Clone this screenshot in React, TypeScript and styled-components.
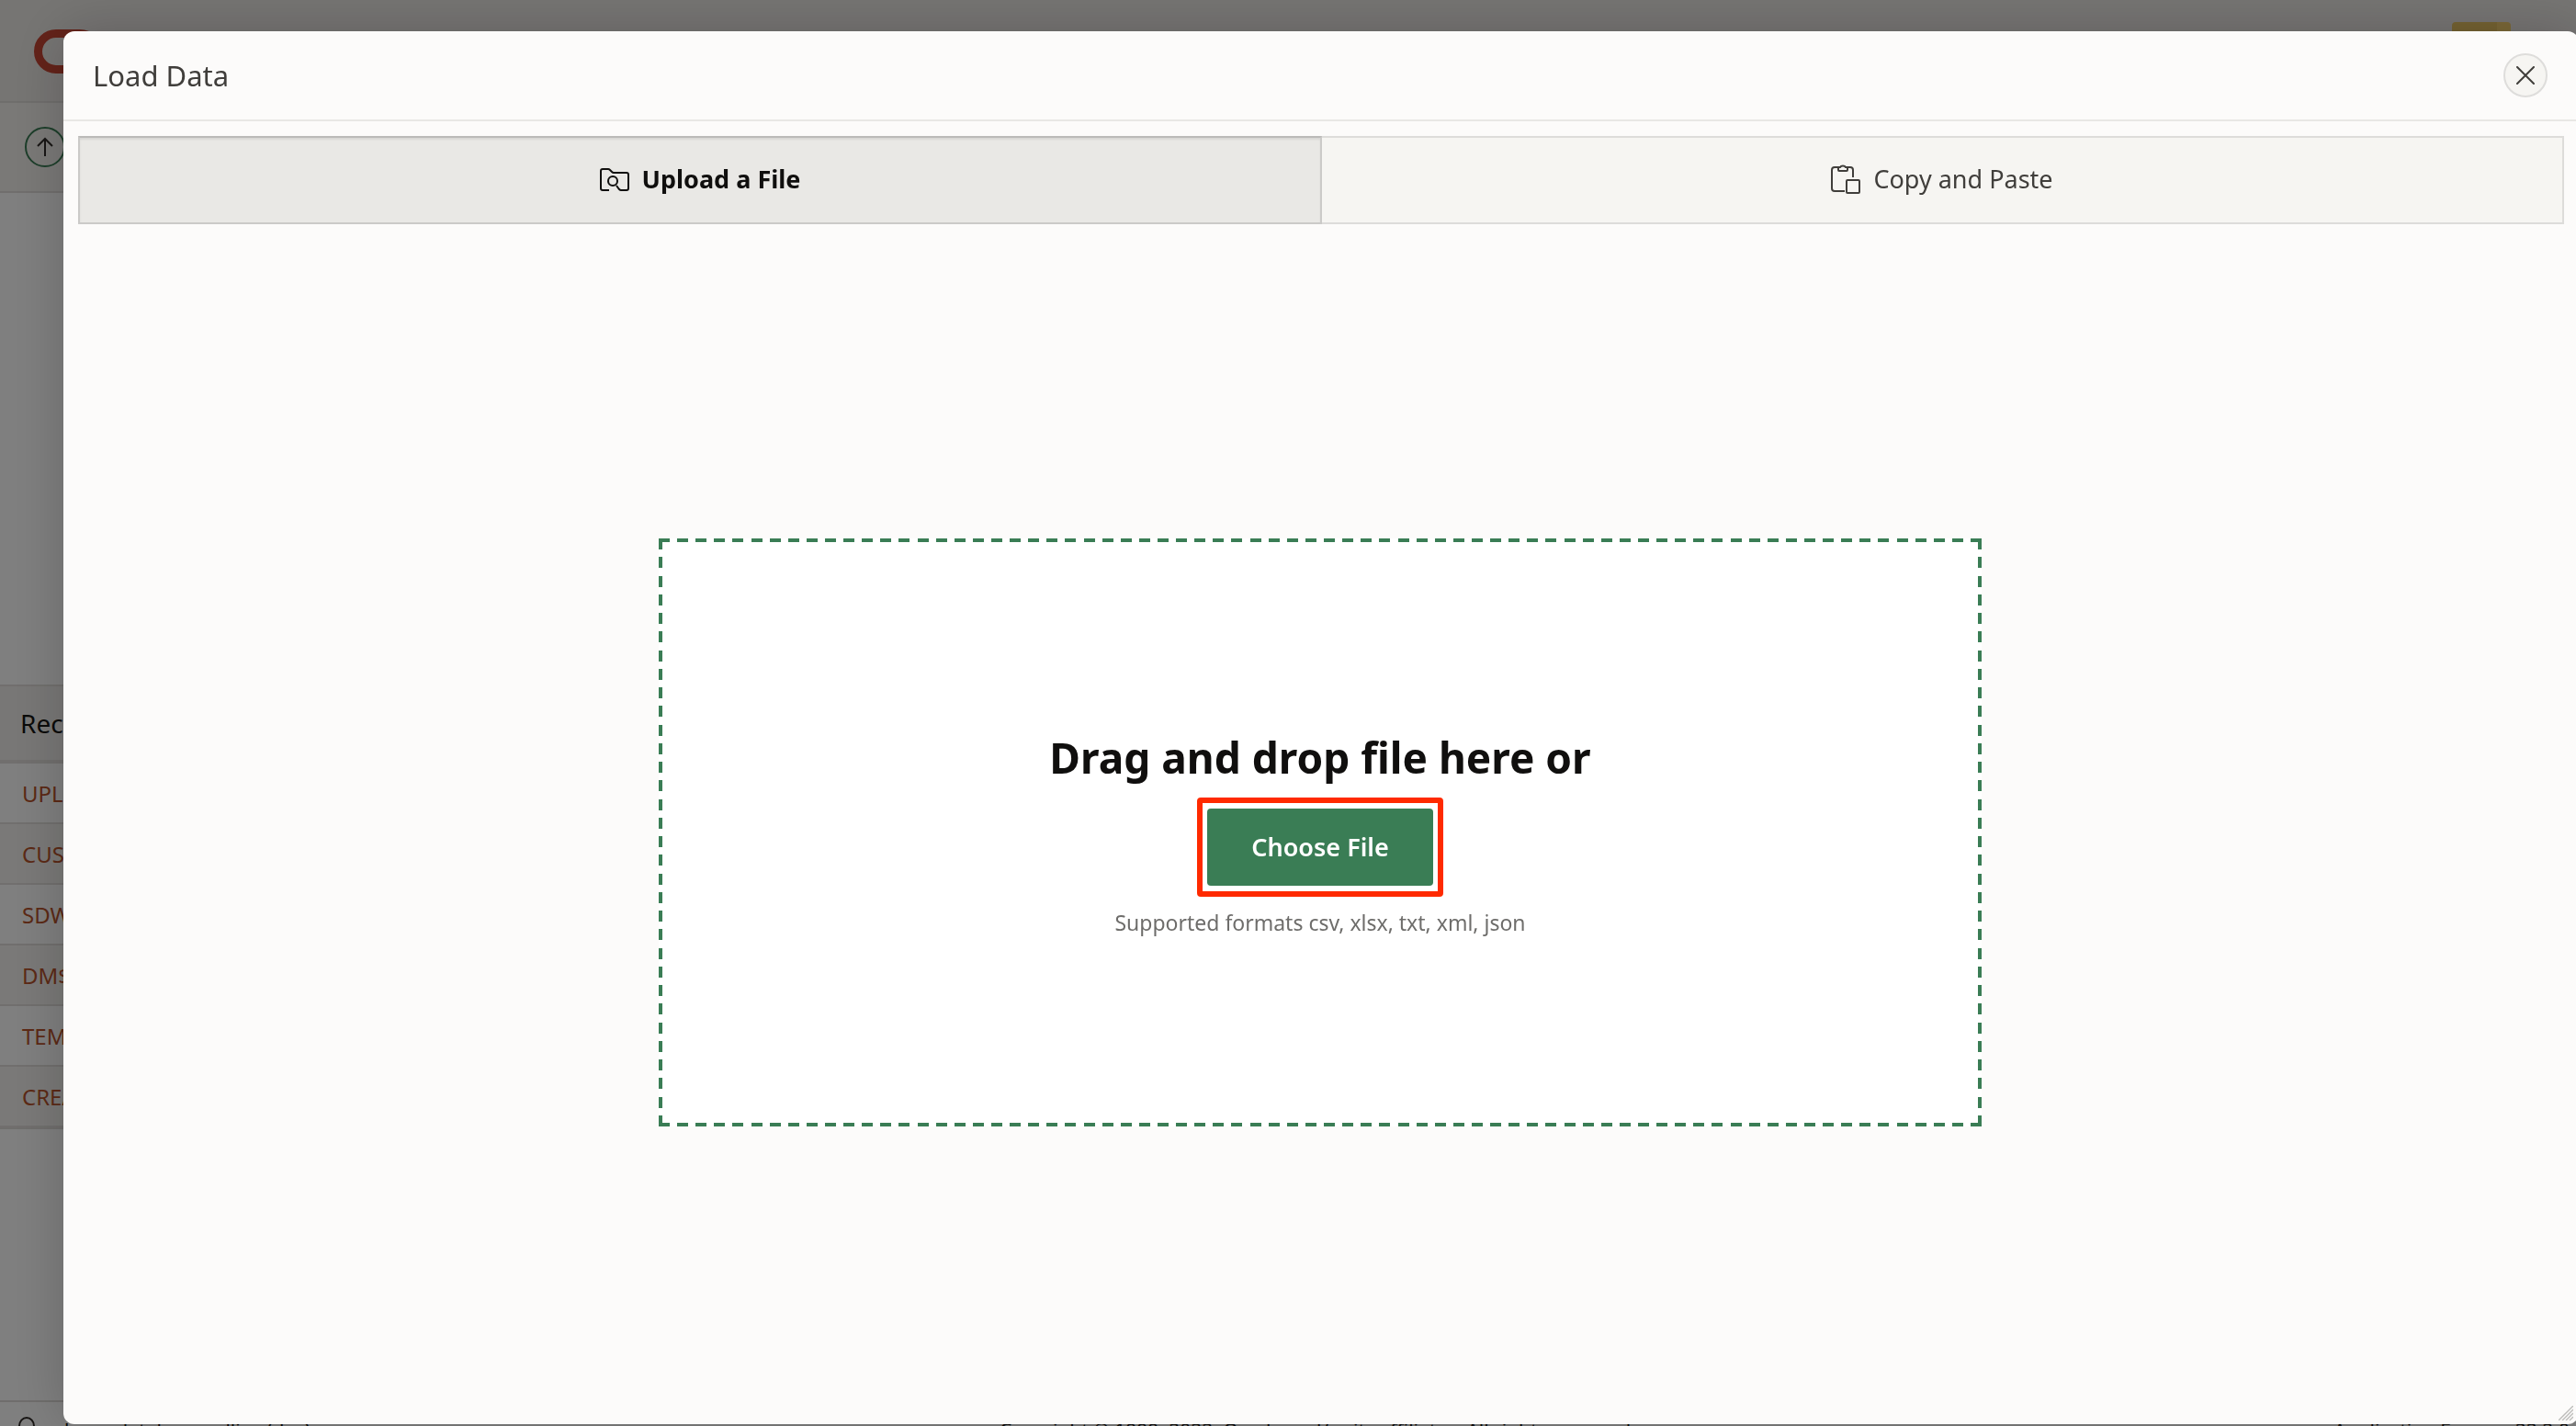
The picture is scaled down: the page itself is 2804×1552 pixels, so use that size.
import React from "react";
import styled, { createGlobalStyle, css } from "styled-components";

const Global = createGlobalStyle`
  * { box-sizing: border-box; }
  html, body, #root { height: 100%; }
  body { margin: 0; overflow: hidden; background: #fff; font-family: "Noto Sans", "Open Sans", sans-serif; color: #161513; }
  button { font: inherit; cursor: pointer; }
`;

const Page = styled.div`
  height: 100%;
  display: flex;
  flex-direction: column;
`;

const AppHeader = styled.header`
  height: 112px;
  padding: 32px 36px;
  display: flex;
  justify-content: space-between;
  align-items: flex-start;
  background: #edeae7;
  border-bottom: 2px solid #dfdcd9;
`;

const Logo = styled.svg`
  width: 76px;
  height: 48px;
  display: block;
`;

const Badge = styled.span`
  width: 64px;
  height: 32px;
  margin: -8px 35px 0 0;
  border-radius: 4px;
  background: linear-gradient(90deg, #e9c463 76%, #f6d06f 76%);
`;

const Crumbs = styled.nav`
  height: 98px;
  padding: 26px 27px;
  background: #f5f2ef;
  border-bottom: 2px solid #e0dddb;
`;

const UpButton = styled.button`
  width: 44px;
  height: 44px;
  padding: 0;
  display: grid;
  place-items: center;
  border: 2px solid #3a7d55;
  border-radius: 50%;
  background: transparent;
  color: #312d2a;
`;

const Recent = styled.section`
  margin-top: 535px;
`;

const RecentTitle = styled.h2`
  margin: 0;
  height: 86px;
  padding: 0 22px;
  border: solid #e2dfdc;
  border-width: 2px 0 4px;
  background: #f1efed;
  font-size: 28px;
  font-weight: 400;
  line-height: 80px;
`;

const RecentList = styled.ul`
  margin: 0;
  padding: 0;
  list-style: none;
  border-bottom: 2px solid #dfdcd9;
`;

const RecentItem = styled.li`
  height: 66px;
  padding: 0 24px;
  border-bottom: 2px solid #e2dfdc;
  line-height: 66px;
  font-size: 24px;
  &:nth-child(even) { background: #f5f3f0; }
`;

const RecentLink = styled.a`
  color: #b8532c;
  text-decoration: none;
`;

const Footer = styled.footer`
  margin-top: auto;
  height: 28px;
  flex: none;
  padding: 16px 7px 0 20px;
  display: grid;
  grid-template-columns: 1fr auto 1fr;
  border-top: 2px solid #dedbd8;
  font-size: 21px;
  line-height: 30px;
`;

const FooterUser = styled.span`
  display: flex;
  gap: 32px;
`;

const Copyright = styled.span`
  padding-left: 52px;
`;

const FooterEnd = styled.span`
  text-align: right;
`;

const Mask = styled.div`
  position: fixed;
  inset: 0;
  display: flex;
  padding: 34px 0 2px 69px;
  background: rgba(0, 0, 0, 0.5);
`;

const Dialog = styled.section`
  position: relative;
  flex: 1;
  margin-right: -3px;
  display: flex;
  flex-direction: column;
  border-radius: 12px;
  background: #fcfbfa;
  box-shadow: 0 0 60px rgba(0, 0, 0, 0.2);
`;

const DialogHeader = styled.header`
  height: 98px;
  padding: 0 34px 0 32px;
  display: flex;
  align-items: center;
  justify-content: space-between;
  border-bottom: 2px solid #e8e7e5;
`;

const DialogTitle = styled.h1`
  margin: 0;
  color: #403e3b;
  font-size: 31px;
  font-weight: 400;
  line-height: 40px;
`;

const CloseButton = styled.button`
  width: 48px;
  height: 48px;
  padding: 0;
  display: grid;
  place-items: center;
  border: 2px solid #dedddb;
  border-radius: 50%;
  background: #f6f5f2;
  color: #403e3b;
`;

const Tabs = styled.div`
  margin: 16px 16px 0;
  display: grid;
  grid-template-columns: calc(50% + 1px) 1fr;
`;

const Tab = styled.button<{ $active?: boolean }>`
  height: 96px;
  padding: 0 0 2px;
  display: flex;
  align-items: center;
  justify-content: center;
  gap: 14px;
  border: 2px solid #dddcda;
  border-left-width: 0;
  border-radius: 0;
  background: #f6f5f2;
  color: #403e3b;
  font-size: 27px;
  line-height: 40px;
  ${(p) =>
    p.$active &&
    css`
      border-color: #bbbab8 #cbcac8 #cbcac8;
      border-left-width: 2px;
      background: #e9e8e5;
      box-shadow: inset 0 2px 2px rgba(0, 0, 0, 0.08);
      color: #100f0e;
      font-weight: 700;
    `}
`;

const Icon = styled.svg`
  width: 32px;
  height: 32px;
  fill: none;
  stroke: currentColor;
  stroke-width: 2;
`;

const DialogBody = styled.div`
  flex: 1;
  padding: 18px 2px 0 0;
  display: flex;
  align-items: center;
  justify-content: center;
`;

/* 12px dashes with 8px gaps, spread so that every side starts and ends on a dash */
const dashes = (angle: string, count: number) =>
  `repeating-linear-gradient(${angle}, #3a7d55 0 12px, transparent 12px calc((100% - 12px) / ${count}))`;

const DropZone = styled.div`
  width: 1440px;
  max-width: 90%;
  padding: 206px 4px;
  display: flex;
  flex-direction: column;
  align-items: center;
  background:
    ${dashes("90deg", 71)} top / 100% 4px no-repeat,
    ${dashes("90deg", 71)} bottom / 100% 4px no-repeat,
    ${dashes("180deg", 31)} left / 4px 100% no-repeat,
    ${dashes("180deg", 31)} right / 4px 100% no-repeat,
    #fff;
`;

const DropTitle = styled.h2`
  margin: 0;
  color: #100f0e;
  font-size: 46px;
  font-weight: 700;
  line-height: 64px;
`;

const Highlight = styled.div`
  margin: 12px 0;
  padding: 6px 5px;
  border: 6px solid #ff2a00;
  border-radius: 4px;
`;

const ChooseButton = styled.button`
  width: 246px;
  height: 84px;
  padding: 0 0 2px;
  display: block;
  border: 0;
  border-radius: 4px;
  background: #3a7d55;
  color: #fff;
  font-size: 27px;
  font-weight: 600;
`;

const Formats = styled.p`
  margin: 0;
  color: #6e6d6b;
  font-size: 23px;
  line-height: 32px;
`;

const Grip = styled.svg`
  position: absolute;
  right: 6px;
  bottom: 4px;
  width: 16px;
  height: 16px;
  stroke: #bdbcba;
  stroke-width: 1.4;
`;

const recent = ["UPLOAD_DATA", "CUSTOMERS", "SDW$ERR", "DM$MODEL", "TEMP_LOAD", "CREATE_TABLE"];

export default function App() {
  return (
    <>
      <Global />
      <Page>
        <AppHeader>
          <Logo viewBox="0 0 76 48" fill="none" stroke="#c74634" strokeWidth="9">
            <rect x="5.500" y="4.500" width="65" height="39" rx="19.500" />
          </Logo>
          <Badge />
        </AppHeader>
        <Crumbs>
          <UpButton aria-label="Up">
            <svg width="20" height="22" viewBox="0 0 20 22" fill="none" stroke="currentColor" strokeWidth="2">
              <path d="M10 21V2M2 10l8-8 8 8" />
            </svg>
          </UpButton>
        </Crumbs>
        <Recent>
          <RecentTitle>Recent</RecentTitle>
          <RecentList>
            {recent.map((name) => (
              <RecentItem key={name}>
                <RecentLink href="#">{name}</RecentLink>
              </RecentItem>
            ))}
          </RecentList>
        </Recent>
        <Footer>
          <FooterUser>
            <svg width="18" height="24" viewBox="0 0 18 24" fill="none" stroke="#312d2a" strokeWidth="2">
              <ellipse cx="9" cy="10" rx="8" ry="9" />
            </svg>
            <span>learn.database.collins (dev)</span>
          </FooterUser>
          <Copyright>Copyright © 1999, 2022, Oracle and/or its affiliates. All rights reserved.</Copyright>
          <FooterEnd>Application Express 22.2.0</FooterEnd>
        </Footer>
      </Page>
      <Mask>
        <Dialog role="dialog" aria-labelledby="dialog-title">
          <DialogHeader>
            <DialogTitle id="dialog-title">Load Data</DialogTitle>
            <CloseButton aria-label="Close">
              <svg width="20" height="20" viewBox="0 0 20 20" stroke="currentColor" strokeWidth="2" strokeLinecap="round">
                <path d="M1 1l18 18M19 1L1 19" />
              </svg>
            </CloseButton>
          </DialogHeader>
          <Tabs role="tablist">
            <Tab role="tab" aria-selected="true" $active>
              <Icon viewBox="0 0 32 32">
                <path d="M10 28H3a2 2 0 0 1-2-2V7a2 2 0 0 1 2-2h6q1 0 2 1l2 2q1 1 2 1h14a2 2 0 0 1 2 2v15a2 2 0 0 1-2 2h-6q-1 0-2-1l-3-4" />
                <circle cx="14" cy="18" r="5" />
              </Icon>
              Upload a File
            </Tab>
            <Tab role="tab" aria-selected="false">
              <Icon viewBox="0 0 32 32">
                <path d="M15 29H4a3 3 0 0 1-3-3V6a3 3 0 0 1 3-3h4M18 3h3a3 3 0 0 1 3 3v8" />
                <path d="M8 3h2c1-2 5-2 6 0h2v3a1 1 0 0 1-1 1H9a1 1 0 0 1-1-1z" />
                <rect x="17" y="17" width="14" height="14" rx="1" />
              </Icon>
              Copy and Paste
            </Tab>
          </Tabs>
          <DialogBody>
            <DropZone>
              <DropTitle>Drag and drop file here or</DropTitle>
              <Highlight>
                <ChooseButton>Choose File</ChooseButton>
              </Highlight>
              <Formats>Supported formats csv, xlsx, txt, xml, json</Formats>
            </DropZone>
          </DialogBody>
          <Grip viewBox="0 0 16 16">
            <path d="M0 16L16 0M4 16L16 4M8 16L16 8M12 16L16 12" />
          </Grip>
        </Dialog>
      </Mask>
    </>
  );
}
